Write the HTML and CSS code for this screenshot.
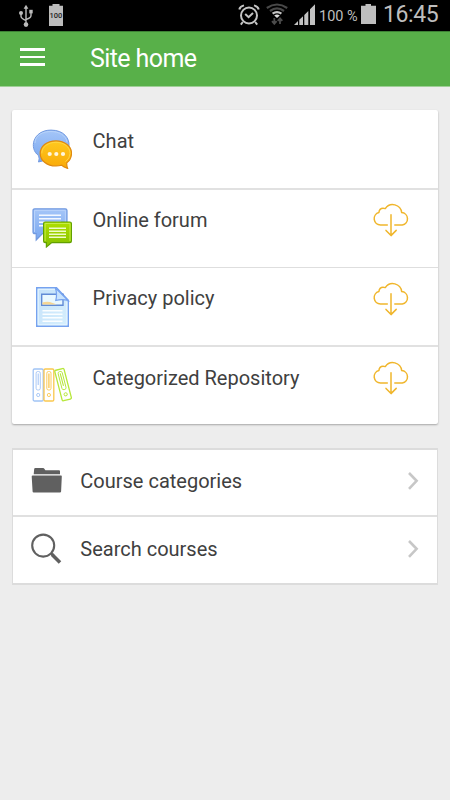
FILE: index.html
```html
<!DOCTYPE html>
<html lang="en">
<head>
<meta charset="utf-8">
<title>Site home</title>
<link rel="stylesheet" href="styles.css">
</head>
<body>
<svg width="0" height="0" class="defs">
  <defs>
    <linearGradient id="blue" x1="0" y1="0" x2="0" y2="1"><stop offset="0" stop-color="#a5c6f8"/><stop offset="1" stop-color="#78a6ef"/></linearGradient>
    <linearGradient id="orange" x1="0" y1="0" x2="0" y2="1"><stop offset="0" stop-color="#ffc91e"/><stop offset="1" stop-color="#f9a908"/></linearGradient>
    <linearGradient id="green" x1="0" y1="0" x2="0" y2="1"><stop offset="0" stop-color="#b0e000"/><stop offset="1" stop-color="#84c000"/></linearGradient>
    <linearGradient id="paper" x1="0" y1="0" x2="1" y2="1"><stop offset="0" stop-color="#c4e1fa"/><stop offset="1" stop-color="#d6effd"/></linearGradient>
    <symbol id="cloud" viewBox="0 0 38 36">
      <g fill="none" stroke="#f0b62c" stroke-width="1.5" stroke-linecap="round" stroke-linejoin="round">
        <path d="M15.3 23.9H8.5A6.3 6.3 0 0 1 6.9 11.5Q7.4 7.2 11 7.2Q12.3 7.2 13.3 7.6A9 9 0 0 1 29.7 11.6A6.2 6.2 0 0 1 30.3 23.9H22.8M19 13.8V34.4M14 29.4L19 34.6L24.2 29.4"/>
      </g>
    </symbol>
    <symbol id="chevron" viewBox="0 0 12 20"><path d="M2 2L9.6 9.8L2 17.8" fill="none" stroke="#c7c7c7" stroke-width="2.6"/></symbol>
  </defs>
</svg>

<div class="status">
  <svg class="usb" width="14" height="24" viewBox="0 0 14 24">
    <g fill="none" stroke="#bcbcbc" stroke-width="1.4"><path d="M7 3V21M2 9V12.2Q2 14.5 7 16.5M12 8V11.5Q12 14 7 15.5"/></g>
    <g fill="#bcbcbc"><path d="M7 .8L9.4 4.8H4.6Z"/><circle cx="2" cy="9" r="2"/><path d="M10.3 5.8H13.7V9.4H10.3Z"/><circle cx="7" cy="20.6" r="2.3"/></g>
  </svg>
  <div class="full"><span>100</span></div>
  <div class="status-right">
    <svg class="alarm" width="22" height="22" viewBox="0 0 22 22">
      <g fill="none" stroke="#c4c4c4" stroke-width="2"><circle cx="11" cy="11.5" r="8"/><path d="M7.2 10L10.6 13.2L15 9M4.8 18L2.8 20.6M17.2 18L19.2 20.6M1.3 5.4Q2 2.4 6 1.4M20.7 5.4Q20 2.4 16 1.4"/></g>
    </svg>
    <svg class="wifi" width="22" height="22" viewBox="0 0 22 22">
      <g fill="none" stroke-width="2.2"><path d="M.8 5Q11-2 21.2 5M4 8Q11 2.7 18 8" stroke="#484848"/><path d="M6.6 10.6Q11 7.5 15.4 10.6" stroke="#c6c6c6"/></g>
      <path d="M8.2 12.4Q11 10.8 13.8 12.4L11 15Z" fill="#ddd"/>
      <path d="M8.3 15V20.5M6 18.2L8.3 20.8L10.6 18.2M14 21V16M11.7 17.8L14 15.4L16.3 17.8" fill="none" stroke="#4c4c4c" stroke-width="1.8"/>
    </svg>
    <svg class="signal" width="21" height="21" viewBox="0 0 21 21"><path d="M0 21L4 17V21ZM5.3 15.8L9 12.2V21H5.3ZM10.3 11L14.3 7V21H10.3ZM16 5.2L21 .2V21H16Z" fill="#c2c2c2"/></svg>
    <span class="percent">100 %</span>
    <svg class="battery" width="15" height="20" viewBox="0 0 15 20"><path d="M0 1.7H4.5V0H10V1.7H15V20H0Z" fill="#bebebe"/></svg>
    <span class="clock">16:45</span>
  </div>
</div>

<header class="bar">
  <div class="menu"><i></i><i></i><i></i></div>
  <h1>Site home</h1>
</header>

<main>
  <section class="card">
    <div class="row thick">
      <svg class="icon" width="40" height="40" viewBox="0 0 40 40">
        <path d="M6.5 33Q7.8 29.8 6.6 26.6C-3.5 19.5 1 1.1 19 1.1C32 1.1 37.5 9.5 37 16.5C36 25 27 29 17 29Q12 32 6.5 33Z" fill="url(#blue)" stroke="#7199e0" stroke-width="1"/>
        <path d="M3 14C3 6 11 2.5 19 2.5S34 6.5 35 13" fill="none" stroke="#b7d3fa" stroke-width="1"/>
        <path d="M24 11.8C33 11.8 39.5 17.5 39.5 24.4Q39.5 30.3 34.8 33.7Q34.5 36.8 35.6 39.4Q31 38 29.5 36.2Q27 37 24 37C14.5 37 8.2 31.2 8.2 24.4S14.5 11.8 24 11.8Z" fill="url(#orange)" stroke="#df8910" stroke-width="1.2"/>
        <path d="M9.8 24.4C9.8 17.8 16 13.3 24 13.3S38 17.8 38 24.4Q38 29.5 33.5 32.6" fill="none" stroke="#ffd94d" stroke-width=".8"/>
        <g fill="#fff6de"><circle cx="17.7" cy="25" r="2.1"/><circle cx="24.3" cy="25" r="2.1"/><circle cx="31" cy="25" r="2.1"/></g>
      </svg>
      <span class="label">Chat</span>
    </div>
    <div class="row thin forum">
      <svg class="icon" width="40" height="40" viewBox="0 0 40 40">
        <path d="M2.8 .8H33.2Q35 .8 35 2.6V25.5H10.5L4.2 32V25.7H2.8Q1 25.7 1 24V2.6Q1 .8 2.8 .8Z" fill="url(#blue)" stroke="#7199df" stroke-width="1.2"/>
        <path d="M2.5 24V2.4H33.4V14" fill="none" stroke="#b8d2fa" stroke-width="1"/>
        <path d="M7 7.3H29M7 10.8H29M7 14.3H29M7 17.8H12" stroke="#f3f8ff" stroke-width="1.5"/>
        <path d="M13.2 14H37.8Q39.4 14 39.4 15.6V33Q39.4 34.6 37.8 34.6H19.8L14.4 39V34.6H13.2Q11.6 34.6 11.6 33V15.6Q11.6 14 13.2 14Z" fill="url(#green)" stroke="#62a000" stroke-width="1.2"/>
        <path d="M13.1 33V15.5H38V33" fill="none" stroke="#c8ed49" stroke-width="1"/>
        <path d="M17 20.2H34M17 23.2H34M17 26.2H34M17 29.2H34" stroke="#f0fccb" stroke-width="1.4"/>
      </svg>
      <span class="label">Online forum</span>
      <svg class="cloud" width="38" height="36"><use href="#cloud"/></svg>
    </div>
    <div class="row thick policy">
      <svg class="icon" width="40" height="40" viewBox="0 0 40 40">
        <path d="M4.7 .8H24.5L36.3 13.2V39.2H4.7Z" fill="url(#paper)" stroke="#76a2ef" stroke-width="1.4"/>
        <path d="M6.2 37.7V2.3H23M34.8 15V37.7H6.2" fill="none" stroke="#e6f6ff" stroke-width="1"/>
        <path d="M9.7 7.3H31V18.2H9.7Z" fill="#e9f8ff" stroke="#618bd6" stroke-width="1.4"/>
        <path d="M10.4 17.4V15.5Q16 13.8 20 15.8L25 17.5Z" fill="#f6d593"/>
        <path d="M23.3 .9Q25.5 7 23.8 13.5Q30 11.8 36.2 13.5Z" fill="#c8e3fd" stroke="#76a2ef" stroke-width="1.2"/>
        <path d="M10.5 23.7H30.5M10.5 27.2H30.5M10.5 30.7H30.5M10.5 34.2H30.5" stroke="#fbfeff" stroke-width="1.6"/>
      </svg>
      <span class="label">Privacy policy</span>
      <svg class="cloud" width="38" height="36"><use href="#cloud"/></svg>
    </div>
    <div class="row repository">
      <svg class="icon" width="40" height="40" viewBox="0 0 40 40">
        <g fill="#fff" stroke-width="1.3">
          <g stroke="#a0c3f5"><rect x="1.2" y="4" width="10" height="32" rx="1.3"/><rect x="4.1" y="6.5" width="4.2" height="18.5" rx="1.7" stroke-width=".9"/><path d="M6.2 8.5V20" stroke-width="1"/><circle cx="6.2" cy="30" r="1.6" stroke-width=".9"/></g>
          <g stroke="#fac74e"><rect x="12" y="4" width="9.8" height="32" rx="1.3"/><rect x="14.8" y="6.5" width="4.2" height="18.5" rx="1.7" stroke-width=".9"/><path d="M16.9 8.5V23" stroke-width="1.3"/><circle cx="16.9" cy="30" r="1.6" stroke-width=".9"/></g>
          <g stroke="#b6e739" transform="rotate(-14.5 31 19.5)"><rect x="26.3" y="3.9" width="9.5" height="31.5" rx="1.3"/><rect x="29" y="6.2" width="4.2" height="18.5" rx="1.7" stroke-width=".9"/><path d="M31.1 8V21" stroke-width="1.1"/><circle cx="31.1" cy="29.7" r="1.6" stroke-width=".9"/></g>
        </g>
      </svg>
      <span class="label">Categorized Repository</span>
      <svg class="cloud" width="38" height="36"><use href="#cloud"/></svg>
    </div>
  </section>

  <nav class="links">
    <div class="link">
      <svg width="32" height="32" viewBox="0 0 32 32"><path d="M3.2 3.8Q3.4 3 4.4 3H12Q13 3 13.5 4L14.4 5.3H28Q29 5.3 29 6.3V9.2H2.7ZM1.7 10.5H30.1Q30.9 10.5 30.8 11.4L30.1 26.5Q30 27.6 29 27.6H2.7Q1.7 27.6 1.6 26.5L.7 11.4Q.6 10.5 1.7 10.5Z" fill="#606060"/></svg>
      <span>Course categories</span>
      <svg class="chev" width="12" height="20"><use href="#chevron"/></svg>
    </div>
    <div class="link">
      <svg width="32" height="32" viewBox="0 0 32 32"><circle cx="12.2" cy="12.6" r="11" fill="none" stroke="#606060" stroke-width="2.1"/><path d="M20 20.2L22.5 22.7" stroke="#606060" stroke-width="2.6"/><path d="M21 21.4L29 29.4" stroke="#606060" stroke-width="3.6"/></svg>
      <span>Search courses</span>
      <svg class="chev" width="12" height="20"><use href="#chevron"/></svg>
    </div>
  </nav>
</main>
</body>
</html>
```

FILE: styles.css
```css
* { box-sizing: border-box; }
body {
  margin: 0;
  height: 800px;
  overflow: hidden;
  background: #ededed;
  color: #404040;
  font-family: Roboto, "Liberation Sans", sans-serif;
}
svg { display: block; flex: none; }
.defs { position: absolute; }

.status {
  display: flex;
  height: 31px;
  padding-left: 19px;
  background: #000;
  color: #bebebe;
}
.usb { margin-top: 4px; }
.full {
  width: 14px;
  height: 22px;
  margin: 4px 0 0 16px;
  background: #bcbcbc;
  clip-path: polygon(0 8%, 25% 8%, 25% 0, 75% 0, 75% 8%, 100% 8%, 100% 100%, 0 100%);
  color: #222;
  font-size: 7.5px;
  font-weight: 500;
  line-height: 24px;
  text-align: center;
}
.status-right {
  display: flex;
  margin-left: 175px;
  white-space: nowrap;
}
.alarm { margin-top: 4px; }
.wifi { margin: 3px 0 0 6px; }
.signal { margin: 4px 0 0 6px; }
.percent {
  width: 38px;
  margin-left: 4px;
  font-size: 14.5px;
  line-height: 33px;
}
.battery { margin: 4px 0 0 4px; }
.clock {
  margin-left: 7px;
  font-size: 23px;
  line-height: 30px;
  letter-spacing: -.4px;
}

.bar {
  display: flex;
  height: 56px;
  padding-left: 20px;
  background: #58b049;
  border-top: 1px solid #3d8235;
  border-bottom: 1px solid #9fcf97;
}
.menu {
  display: flex;
  flex-direction: column;
  gap: 5px;
  width: 25px;
  margin-top: 16px;
}
.menu i { height: 2.7px; background: #fff; }
h1 {
  margin: 0 0 0 45px;
  color: #fff;
  font-size: 25px;
  font-weight: 400;
  line-height: 53px;
  letter-spacing: -.6px;
}

main { padding: 23px 12px 0; }
.card {
  height: 314px;
  padding-top: 1px;
  background: #fff;
  border-radius: 2px;
  box-shadow: 0 1px 2px rgba(0, 0, 0, .3);
}
.row {
  display: flex;
  height: 77px;
  padding: 18px 28px 0 20px;
}
.row.thick { height: 79px; border-bottom: 2px solid #e1e1e1; }
.row.thin { height: 78px; border-bottom: 1px solid #dedede; }
.forum .icon { margin-top: -.5px; }
.policy .icon { margin-top: .5px; }
.label {
  flex: 1;
  margin-left: 20.6px;
  font-size: 20px;
  line-height: 24px;
}
.repository .label { line-height: 26px; }
.cloud { margin-top: -6px; }
.forum .cloud { margin-top: -7px; }

.links {
  margin-top: 24px;
  background: #fff;
  border: solid #dcdcdc;
  border-width: 2px 1px;
}
.link {
  display: flex;
  align-items: center;
  height: 65px;
  padding: 0 18px 3px;
  font-size: 20px;
}
.link + .link { height: 68px; border-top: 2px solid #e0e0e0; }
.link span { flex: 1; margin-left: 17.3px; }
```
